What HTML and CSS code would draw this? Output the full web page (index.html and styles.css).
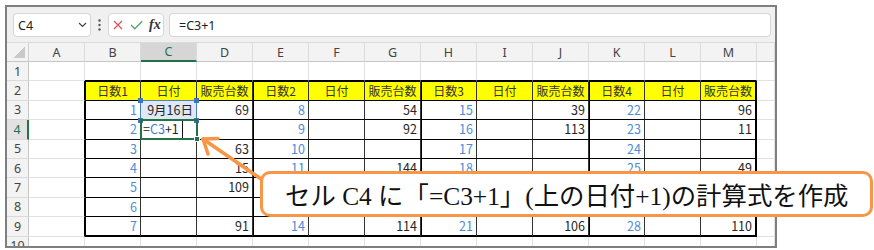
FILE: index.html
```html
<!DOCTYPE html>
<html lang="ja">
<head>
<meta charset="utf-8">
<title>Excel</title>
<link rel="stylesheet" href="styles.css">
</head>
<body>
<div class="frame">
  <div class="toolbar">
    <div class="namebox"><span>C4</span><svg class="chev" width="9" height="6" viewBox="0 0 9 6"><path d="M1 1 L4.5 4.5 L8 1" fill="none" stroke="#444" stroke-width="1.2"/></svg></div>
    <div class="dots"><svg width="3" height="12" viewBox="0 0 3 12"><circle cx="1.5" cy="1.5" r="1.2" fill="#555"/><circle cx="1.5" cy="6" r="1.2" fill="#555"/><circle cx="1.5" cy="10.5" r="1.2" fill="#555"/></svg></div>
    <div class="iconbox">
      <svg class="ic-x" width="10" height="10" viewBox="0 0 10 10"><path d="M1 1 L9 9 M9 1 L1 9" stroke="#e05555" stroke-width="1.3" fill="none"/></svg>
      <svg class="ic-ok" width="13" height="10" viewBox="0 0 13 10"><path d="M1 5 L4.8 8.8 L12.2 1.2" stroke="#52a46a" stroke-width="1.3" fill="none"/></svg>
      <span class="fx">fx</span>
    </div>
    <div class="formula">=C3+1</div>
  </div>
  <div class="sheet">
    <div class="corner"></div>
    <div class="ch">A</div><div class="ch">B</div><div class="ch sel">C</div><div class="ch">D</div><div class="ch">E</div><div class="ch">F</div><div class="ch">G</div><div class="ch">H</div><div class="ch">I</div><div class="ch">J</div><div class="ch">K</div><div class="ch">L</div><div class="ch">M</div><div class="ch"></div>

    <div class="rh">1</div>
    <div class="c"></div><div class="c tt"></div><div class="c tt"></div><div class="c tt"></div><div class="c tt"></div><div class="c tt"></div><div class="c tt"></div><div class="c tt"></div><div class="c tt"></div><div class="c tt"></div><div class="c tt"></div><div class="c tt"></div><div class="c tt"></div><div class="c"></div>

    <div class="rh">2</div>
    <div class="c tl"></div>
    <div class="t y gl top">日数1</div><div class="t y top">日付</div><div class="t y top">販売台数</div>
    <div class="t y gl top">日数2</div><div class="t y top">日付</div><div class="t y top">販売台数</div>
    <div class="t y gl top">日数3</div><div class="t y top">日付</div><div class="t y top">販売台数</div>
    <div class="t y gl top">日数4</div><div class="t y top">日付</div><div class="t y top rm">販売台数</div>
    <div class="c"></div>

    <div class="rh">3</div>
    <div class="c tl"></div>
    <div class="t gl bl">1</div><div class="t ref">9月16日</div><div class="t">69</div>
    <div class="t gl bl">8</div><div class="t"></div><div class="t">54</div>
    <div class="t gl bl">15</div><div class="t"></div><div class="t">39</div>
    <div class="t gl bl">22</div><div class="t"></div><div class="t rm">96</div>
    <div class="c"></div>

    <div class="rh sel">4</div>
    <div class="c tl"></div>
    <div class="t gl bl">2</div><div class="t edit">=<span class="refc">C3</span>+1<span class="caret"></span></div><div class="t"></div>
    <div class="t gl bl">9</div><div class="t"></div><div class="t">92</div>
    <div class="t gl bl">16</div><div class="t"></div><div class="t">113</div>
    <div class="t gl bl">23</div><div class="t"></div><div class="t rm">11</div>
    <div class="c"></div>

    <div class="rh">5</div>
    <div class="c tl"></div>
    <div class="t gl bl">3</div><div class="t"></div><div class="t">63</div>
    <div class="t gl bl">10</div><div class="t"></div><div class="t"></div>
    <div class="t gl bl">17</div><div class="t"></div><div class="t"></div>
    <div class="t gl bl">24</div><div class="t"></div><div class="t rm"></div>
    <div class="c"></div>

    <div class="rh">6</div>
    <div class="c tl"></div>
    <div class="t gl bl">4</div><div class="t"></div><div class="t">15</div>
    <div class="t gl bl">11</div><div class="t"></div><div class="t">144</div>
    <div class="t gl bl">18</div><div class="t"></div><div class="t"></div>
    <div class="t gl bl">25</div><div class="t"></div><div class="t rm">49</div>
    <div class="c"></div>

    <div class="rh">7</div>
    <div class="c tl"></div>
    <div class="t gl bl">5</div><div class="t"></div><div class="t">109</div>
    <div class="t gl"></div><div class="t"></div><div class="t"></div>
    <div class="t gl"></div><div class="t"></div><div class="t"></div>
    <div class="t gl"></div><div class="t"></div><div class="t rm"></div>
    <div class="c"></div>

    <div class="rh">8</div>
    <div class="c tl"></div>
    <div class="t gl bl">6</div><div class="t"></div><div class="t"></div>
    <div class="t gl"></div><div class="t"></div><div class="t"></div>
    <div class="t gl"></div><div class="t"></div><div class="t"></div>
    <div class="t gl"></div><div class="t"></div><div class="t rm"></div>
    <div class="c"></div>

    <div class="rh">9</div>
    <div class="c tl"></div>
    <div class="t gl bl bt">7</div><div class="t bt"></div><div class="t bt">91</div>
    <div class="t gl bl bt">14</div><div class="t bt"></div><div class="t bt">114</div>
    <div class="t gl bl bt">21</div><div class="t bt"></div><div class="t bt">106</div>
    <div class="t gl bl bt">28</div><div class="t bt"></div><div class="t rm bt">110</div>
    <div class="c"></div>

    <div class="rh">10</div>
    <div class="c"></div><div class="c"></div><div class="c"></div><div class="c"></div><div class="c"></div><div class="c"></div><div class="c"></div><div class="c"></div><div class="c"></div><div class="c"></div><div class="c"></div><div class="c"></div><div class="c"></div><div class="c"></div>

    <div class="refbox"><i class="h h1"></i><i class="h h2"></i><i class="h h3"></i><i class="h h4"></i></div>
    <div class="activebox"><i class="fill"></i></div>
  </div>
</div>
<svg class="arrow" width="874" height="250" viewBox="0 0 874 250">
  <path d="M203 139 L280 192" stroke="#f79646" stroke-width="3.5" stroke-linecap="round" fill="none"/>
  <path d="M218 138.5 L203 139 L208 154" stroke="#f79646" stroke-width="3.5" stroke-linecap="round" stroke-linejoin="round" fill="none"/>
</svg>
<div class="callout">セル C4 に「=C3+1」(上の日付+1)の計算式を作成</div>
</body>
</html>
```

FILE: styles.css
```css
* { box-sizing: border-box; }
body {
  margin: 0;
  background: #fff;
  font-family: "Noto Sans", "Noto Sans CJK JP", sans-serif;
}
.frame {
  margin: 5px 0 0 5px;
  width: 772px;
  height: 243px;
  border: 2px solid #7f7f7f;
  overflow: hidden;
  background: #fff;
}
.toolbar {
  height: 36px;
  background: #f0f0f0;
  border-bottom: 1px solid #dadada;
  display: flex;
  align-items: flex-start;
  padding: 6px 0 0 6px;
}
.namebox {
  width: 78px;
  height: 24px;
  background: #fff;
  border: 1px solid #d6d6d6;
  border-radius: 4px;
  display: flex;
  align-items: center;
  justify-content: space-between;
  padding: 0 3px 0 4px;
  font-size: 12.5px;
  color: #222;
}
.dots {
  width: 17px;
  height: 24px;
  display: flex;
  align-items: center;
  justify-content: center;
}
.dots svg { display: block; }
.iconbox {
  width: 56px;
  height: 24px;
  background: #fff;
  border: 1px solid #d6d6d6;
  border-radius: 4px;
  display: flex;
  align-items: center;
  padding-left: 4px;
}
.ic-x { display: block; }
.ic-ok { display: block; margin-left: 7px; }
.fx {
  margin-left: 6px;
  font-family: "Liberation Serif", serif;
  font-style: italic;
  font-weight: bold;
  font-size: 14px;
  color: #333;
  line-height: 1;
}
.formula {
  margin-left: 5px;
  width: 602px;
  height: 24px;
  background: #fff;
  border: 1px solid #d6d6d6;
  border-radius: 4px;
  padding-left: 9px;
  display: flex;
  align-items: center;
  font-size: 12.5px;
  color: #222;
}
.sheet {
  position: relative;
  display: grid;
  grid-template-columns: 22px repeat(13, 56px) 18px;
  grid-template-rows: 19px repeat(10, 19.4px);
}
.corner {
  background: #f3f3f3 linear-gradient(to bottom right, transparent 50%, #c9c9c9 50%) no-repeat right 3px bottom 3px / 11px 11px;
  border-right: 1px solid #d0d0d0;
  border-bottom: 1px solid #c6c6c6;
}
.ch {
  background: #f3f3f3;
  border-right: 1px solid #dadada;
  border-bottom: 1px solid #c6c6c6;
  display: flex;
  align-items: center;
  justify-content: center;
  font-size: 12.5px;
  color: #444;
}
.ch.sel {
  background: #d6d6d6;
  color: #217346;
  border-bottom: 2px solid #217346;
}
.rh {
  background: #f3f3f3;
  border-right: 1px solid #c6c6c6;
  border-bottom: 1px solid #dadada;
  display: flex;
  align-items: center;
  justify-content: center;
  font-size: 12.5px;
  color: #444;
}
.rh.sel {
  background: #e2e2e2;
  color: #217346;
  border-right: 2px solid #217346;
}
.c {
  border-right: 1px solid #e1e1e1;
  border-bottom: 1px solid #e1e1e1;
}
.c.tt { border-bottom-color: #000; }
.c.tl { border-right-color: #000; }
.t {
  border-right: 1px solid #333;
  border-bottom: 1px solid #000;
  display: flex;
  align-items: center;
  justify-content: flex-end;
  padding-right: 3px;
  font-family: "Noto Sans CJK JP", sans-serif;
  font-size: 12.5px;
  line-height: 1;
  color: #262626;
  background: #fff;
  white-space: nowrap;
}
.t.y {
  background: #ffff00;
  justify-content: center;
  padding-right: 0;
  font-size: 12px;
  color: #333;
}
.t.bl { color: #4b8dd6; }
.t.gl { box-shadow: inset 1px 0 0 #000; }
.t.top { box-shadow: inset 0 1px 0 #000; }
.t.gl.top { box-shadow: inset 1px 0 0 #000, inset 0 1px 0 #000; }
.t.rm { border-right: 2px solid #000; }
.t.bt { border-bottom: 2px solid #000; }
.t.ref { background: #dfe8f4; }
.t.edit {
  justify-content: flex-start;
  padding-left: 2px;
  padding-right: 0;
  color: #222;
}
.refc { color: #3d7ad0; }
.caret {
  display: inline-block;
  width: 1px;
  height: 17px;
  background: #111;
  margin-left: 3px;
}
.refbox {
  position: absolute;
  left: 133px;
  top: 57px;
  width: 57px;
  height: 21px;
  border: 1px solid #4a7fc4;
}
.h {
  position: absolute;
  width: 5px;
  height: 5px;
  background: #3e73c0;
}
.h1 { left: -3px; top: -3px; }
.h2 { right: -3px; top: -3px; }
.h3 { left: -3px; bottom: -3px; }
.h4 { right: -3px; bottom: -3px; }
.activebox {
  position: absolute;
  left: 133px;
  top: 76px;
  width: 58px;
  height: 21px;
  border: 2px solid #217346;
}
.fill {
  position: absolute;
  right: -4px;
  bottom: -4px;
  width: 6px;
  height: 6px;
  background: #217346;
  border: 1px solid #fff;
}
.arrow {
  position: absolute;
  left: 0;
  top: 0;
  pointer-events: none;
}
.callout {
  position: absolute;
  left: 260px;
  top: 171px;
  width: 613px;
  height: 46px;
  border: 3px solid #f79646;
  border-radius: 10px;
  background: #fff;
  display: flex;
  align-items: center;
  padding-left: 22px;
  font-family: "Liberation Serif", "Noto Sans CJK JP", serif;
  font-size: 25.4px;
  color: #111;
  white-space: nowrap;
}
```
